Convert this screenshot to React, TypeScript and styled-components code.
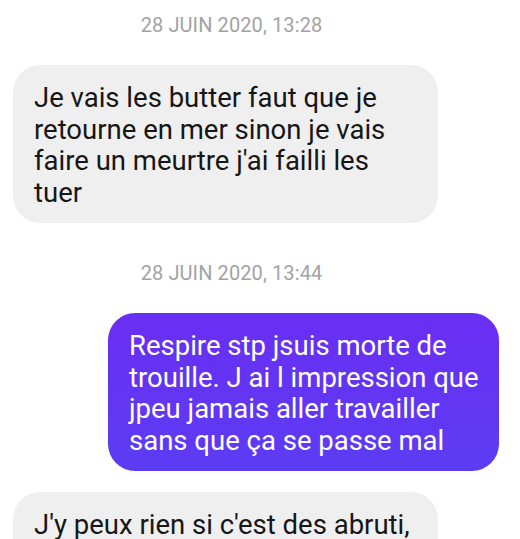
import React from "react";
import styled, { createGlobalStyle } from "styled-components";

const Global = createGlobalStyle`
  html, body {
    margin: 0;
    padding: 0;
    background: #ffffff;
    overflow: hidden;
  }
  body {
    font-family: Roboto, "Noto Sans", "Liberation Sans", sans-serif;
  }
`;

const Thread = styled.main`
  display: flex;
  flex-direction: column;
  padding: 13px 21px 0 13px;
  width: 520px;
  box-sizing: border-box;
`;

const Stamp = styled.div<{ $gapBefore?: number }>`
  margin-top: ${(p) => p.$gapBefore ?? 0}px;
  padding-right: 49px;
  margin-bottom: 28px;
  text-align: center;
  font-size: 20px;
  line-height: 24px;
  color: #a3a3a3;
  letter-spacing: 0.1px;
`;

const Bubble = styled.div<{ $mine?: boolean; $width: number; $gapAfter?: number; $padRight: number }>`
  box-sizing: border-box;
  width: ${(p) => p.$width}px;
  align-self: ${(p) => (p.$mine ? "flex-end" : "flex-start")};
  margin-bottom: ${(p) => p.$gapAfter ?? 0}px;
  padding: 17px ${(p) => p.$padRight}px 15px 21px;
  border-radius: 27px;
  font-size: 27.5px;
  line-height: 31.5px;
  color: ${(p) => (p.$mine ? "#ffffff" : "#161616")};
  background: ${(p) =>
    p.$mine ? "linear-gradient(180deg, #6a2ef3 0%, #5c3cf3 100%)" : "#efefef"};
`;

export default function App() {
  return (
    <>
      <Global />
      <Thread>
        <Stamp>28 JUIN 2020, 13:28</Stamp>
        <Bubble $width={425} $padRight={22}>
          Je vais les butter faut que je retourne en mer sinon je vais faire un meurtre j'ai
          failli les tuer
        </Bubble>
        <Stamp $gapBefore={38}>28 JUIN 2020, 13:44</Stamp>
        <Bubble $mine $width={391} $padRight={16} $gapAfter={21}>
          Respire stp jsuis morte de trouille. J ai l impression que jpeu jamais aller
          travailler sans que ça se passe mal
        </Bubble>
        <Bubble $width={425} $padRight={22}>
          J'y peux rien si c'est des abruti, ils ne comprennent rien
        </Bubble>
      </Thread>
    </>
  );
}
